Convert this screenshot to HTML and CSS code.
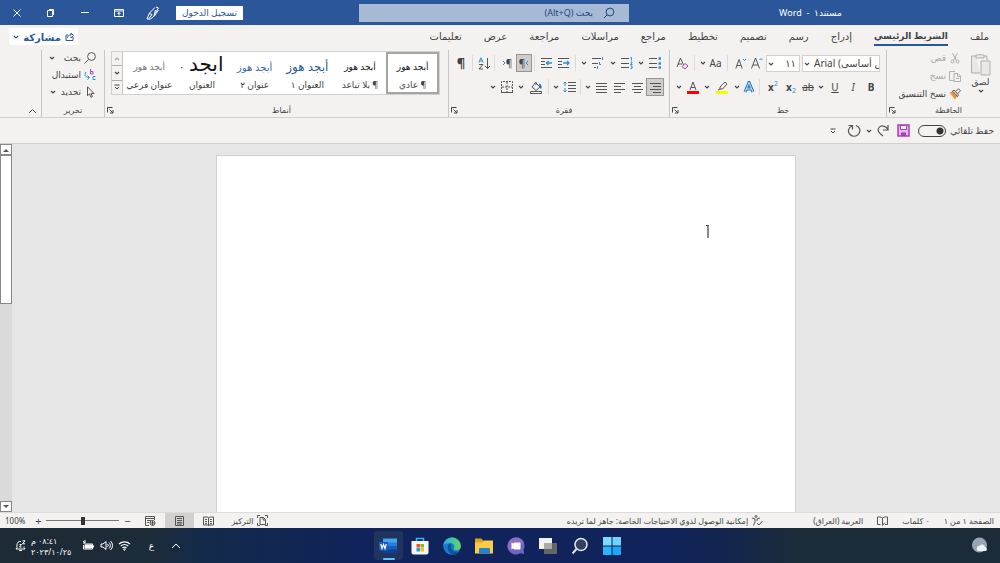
FILE: index.html
```html
<!DOCTYPE html>
<html lang="ar" dir="rtl">
<head>
    <meta charset="UTF-8">
    <meta name="viewport" content="width=device-width, initial-scale=1.0">
    <title>مستند١ - Word</title>
    <link rel="stylesheet" href="styles.css">
</head>
<body>
    <!-- Shared shapes -->
    <svg class="defs" aria-hidden="true">
        <symbol id="chev" viewBox="0 0 6 6"><path d="M1 2l2 2 2-2" fill="none" stroke="currentColor" stroke-width="1.1"/></symbol>
        <symbol id="launch" viewBox="0 0 7 7"><path d="M.5 5.500V.5h5M2.500 2.500L6 6M6 3v3H3" fill="none" stroke="currentColor"/></symbol>
        <symbol id="more" viewBox="0 0 6 6"><path d="M.5 1h5" stroke="currentColor"/><path d="M1 3l2 2 2-2" fill="none" stroke="currentColor"/></symbol>
    </svg>

    <header class="titlebar">
        <div class="doc-title">مستند١ &nbsp;-&nbsp; <span dir="ltr">Word</span></div>
        <label class="search">
            <svg width="12" height="12" viewBox="0 0 12 12"><circle cx="7" cy="5" r="3.900"/><path d="M4.300 7.700L1 11"/></svg>
            <input type="text" placeholder="بحث (Alt+Q)" aria-label="بحث">
        </label>
        <div class="window-tools">
            <button class="signin">تسجيل الدخول</button>
            <button class="win" aria-label="القلم"><svg width="14" height="14" viewBox="0 0 14 14"><path d="M9 1.500L3.500 7 1 13h3.500L8 10l1.500-6M3.500 7.500L6 8.500 3 12.500M10 1l2.500 1L9 7.500M12.500 4L8 10.500"/></svg></button>
            <button class="win" aria-label="خيارات عرض الشريط"><svg width="10" height="10" viewBox="0 0 10 10"><path d="M.5 1.500h9v7h-9zM.5 3h9M5 7.500V4.500M3.500 6L5 4.500 6.500 6"/></svg></button>
            <button class="win" aria-label="تصغير"><svg width="8" height="8" viewBox="0 0 8 8"><path d="M0 3.500h8"/></svg></button>
            <button class="win" aria-label="استعادة"><svg width="8" height="8" viewBox="0 0 8 8"><path d="M.5 1.500h5v6h-5zM2 .5h4.500V6"/></svg></button>
            <button class="win" aria-label="إغلاق"><svg width="8" height="8" viewBox="0 0 8 8"><path d="M.5.5l7 7M7.500.5l-7 7"/></svg></button>
        </div>
    </header>

    <nav class="tabs">
        <a href="#file">ملف</a>
        <a href="#home" class="active">الشريط الرئيسي</a>
        <a href="#insert">إدراج</a>
        <a href="#draw">رسم</a>
        <a href="#design">تصميم</a>
        <a href="#layout">تخطيط</a>
        <a href="#refs">مراجع</a>
        <a href="#mail">مراسلات</a>
        <a href="#review">مراجعة</a>
        <a href="#view">عرض</a>
        <a href="#help">تعليمات</a>
        <button class="share">
            <svg width="9" height="9" viewBox="0 0 9 9" class="ic"><path d="M3 3H1v5.500h7V5M2.500 6c0-2 1.500-3 3.500-3V1l2.500 2.500L6 6V4.500"/></svg>
            مشاركة
            <svg class="chev"><use href="#chev"/></svg>
        </button>
    </nav>

    <section class="ribbon">
        <div class="group">
            <div class="clipboard">
                <button class="paste">
                    <svg width="21" height="23" viewBox="0 0 21 23" class="ic gray"><path d="M6 3H1.500v17H10M14 3h3v4M6 5V2h2.500a2 2 0 0 1 3 0H14v3zM11 8h9v14h-9z" fill="#e9e8e7"/></svg>
                    <span>لصق</span>
                    <svg class="chev"><use href="#chev"/></svg>
                </button>
                <div class="stack">
                    <button disabled><svg width="12" height="12" viewBox="0 0 12 12" class="ic gray"><path d="M3.500 1l4 7.500M8.500 1l-4 7.500"/><circle cx="3.500" cy="9.500" r="1.500"/><circle cx="8.500" cy="9.500" r="1.500"/></svg>قص</button>
                    <button disabled><svg width="12" height="12" viewBox="0 0 12 12" class="ic gray"><path d="M5 10.500H.5v-9H6M5 3.500h4l2.500 2.500v5.500H5zM8.500 3.500v3h3M7 8.500h3"/></svg>نسخ</button>
                    <button><svg width="12" height="12" viewBox="0 0 12 12"><path d="M.5 4.500L5 2.500l4 5L6 11.500z" fill="#f0923a"/><path d="M3.500 3L5 2l4.500 5-1 1.500z" fill="#fff" stroke="#555"/><path d="M6.500 3.500L9.500.8l2 2-3 3z" fill="#fff" stroke="#555"/></svg>نسخ التنسيق</button>
                </div>
            </div>
            <div class="caption wide"><span>الحافظة</span><svg class="launch"><use href="#launch"/></svg></div>
        </div>

        <div class="group">
            <div class="row font-row">
                <span class="combo font-name"><select dir="ltr" aria-label="الخط"><option>Arial (نص أساسي)</option></select><svg class="chev"><use href="#chev"/></svg></span>
                <span class="combo font-size"><select aria-label="حجم الخط"><option>١١</option></select><svg class="chev"><use href="#chev"/></svg></span>
                <button class="w17" aria-label="تكبير"><svg width="13" height="12" viewBox="0 0 13 12" class="ic"><path d="M.5 11.500L4.500 1l4 10.500M2 8h5"/><path d="M8.500 3L10 1.500 11.500 3" class="blue"/></svg></button>
                <button class="w17" aria-label="تصغير"><svg width="12" height="12" viewBox="0 0 12 12" class="ic"><path d="M.8 11.500L4 2.500l3.200 9M2 8.500h4"/><path d="M8 2l1.500 1.500L11 2" class="blue"/></svg></button>
                <i class="sep s8"></i>
                <button class="w17">Aa</button>
                <button class="drop w8" aria-label="المزيد"><svg class="chev"><use href="#chev"/></svg></button>
                <i class="sep s8"></i>
                <button class="w17" aria-label="مسح"><svg width="13" height="13" viewBox="0 0 13 13" class="ic"><path d="M1 10l3.500-9L8 9M2 7h4"/><path d="M6 9.500l3-3 3 2.500-3 3z" fill="#f3e3f5" stroke="#a63fb5"/></svg></button>
            </div>
            <div class="row font-row">
                <button class="w18"><b>B</b></button>
                <button class="w18"><em>I</em></button>
                <button class="w18"><u>U</u></button>
                <button class="drop w10" aria-label="تسطير"><svg class="chev"><use href="#chev"/></svg></button>
                <button class="w16"><s>ab</s></button>
                <button class="w18" dir="ltr"><b>x</b><sub>2</sub></button>
                <button class="w18" dir="ltr"><b>x</b><sup>2</sup></button>
                <i class="sep s8"></i>
                <button class="w14" aria-label="تأثيرات النص"><svg width="12" height="12" viewBox="0 0 12 12"><path d="M2 11L6 1.500 10 11M3.500 8h5" fill="none" stroke="#1f6fb8" stroke-width="3"/><path d="M2 11L6 1.500 10 11M3.500 8h5" fill="none" stroke="#d9ecf9"/></svg></button>
                <button class="drop w10" aria-label="المزيد"><svg class="chev"><use href="#chev"/></svg></button>
                <button class="w20" aria-label="تمييز"><svg width="12" height="13" viewBox="0 0 12 13" class="ic"><path d="M4 6l5-5 2 2-4.500 5H4zM4 8L2 9"/><path d="M0 11.500h12" stroke="#ff0" stroke-width="3"/></svg></button>
                <button class="drop w10" aria-label="المزيد"><svg class="chev"><use href="#chev"/></svg></button>
                <button class="w18" aria-label="لون الخط"><svg width="12" height="13" viewBox="0 0 12 13" class="ic"><path d="M3 9l3-8 3 8M4 6.500h4"/><path d="M0 11.500h12" stroke="#f00" stroke-width="3"/></svg></button>
                <button class="drop w10" aria-label="المزيد"><svg class="chev"><use href="#chev"/></svg></button>
            </div>
            <div class="caption wide"><span>خط</span><svg class="launch"><use href="#launch"/></svg></div>
        </div>

        <div class="group">
            <div class="row para-row">
                <button class="w18" aria-label="تعداد نقطي"><svg width="12" height="12" viewBox="0 0 12 12" class="ic"><path d="M0 1.500h8M0 6.500h8M0 10.500h8"/><path d="M9.500 1.500h2.500M9.500 6.500h2.500M9.500 10.500h2.500" class="blue" stroke-width="2.500"/></svg></button>
                <button class="drop w10" aria-label="المزيد"><svg class="chev"><use href="#chev"/></svg></button>
                <button class="w18" aria-label="تعداد رقمي"><svg width="12" height="12" viewBox="0 0 12 12" class="ic"><path d="M0 1.500h8M0 6.500h8M0 10.500h8"/><path d="M9.500.5h1V3.500M9.500 5h1.500v1l-1.500 1.500h2M9.500 9h1.500v2.500H9.500" class="blue"/></svg></button>
                <button class="drop w10" aria-label="المزيد"><svg class="chev"><use href="#chev"/></svg></button>
                <button class="w20" aria-label="متعدد المستويات"><svg width="12" height="12" viewBox="0 0 12 12" class="ic"><path d="M0 1.500h9M0 6.500h6M2 10.500h2"/><path d="M10.500 0V3M7.500 5v2.500H9M5.500 9v3" class="blue"/></svg></button>
                <button class="drop w8" aria-label="المزيد"><svg class="chev"><use href="#chev"/></svg></button>
                <i class="sep s8"></i>
                <button class="w16" aria-label="إنقاص المسافة"><svg width="12" height="10" viewBox="0 0 12 10" class="ic"><path d="M0 .5h11M0 9.500h11M0 3.500h4M0 6.500h4"/><path d="M5 5h6M9 3l2 2-2 2" class="blue" stroke-width="1.300"/></svg></button>
                <button class="w18" aria-label="زيادة المسافة"><svg width="12" height="10" viewBox="0 0 12 10" class="ic"><path d="M0 .5h11M0 9.500h11M0 3.500h4M0 6.500h4"/><path d="M11 5H5M7.500 3l-2 2 2 2" class="blue" stroke-width="1.300"/></svg></button>
                <i class="sep s6"></i>
                <button class="w16 pressed" dir="ltr">¶<svg width="4" height="6" viewBox="0 0 4 6" class="ic"><path d="M3 1L1 3l2 2" class="blue"/></svg></button>
                <button class="w18" dir="ltr"><svg width="4" height="6" viewBox="0 0 4 6" class="ic"><path d="M1 1l2 2-2 2" class="blue"/></svg>¶</button>
                <i class="sep s6"></i>
                <button class="w16" aria-label="فرز"><svg width="13" height="13" viewBox="0 0 13 13" class="ic"><path d="M.8 5.500L3 .8l2.200 4.700M1.500 4h3" class="blue"/><path d="M1 7.500h4l-4 4.500h4M9.500 1v10.500M7 9l2.500 2.500L12 9"/></svg></button>
                <i class="sep s6"></i>
                <button class="w18 pilcrow">¶</button>
            </div>
            <div class="row para-row">
                <button class="w18 pressed" aria-label="محاذاة لليمين"><svg width="11" height="11" viewBox="0 0 11 11" class="ic"><path d="M0 1.500h11M3 4.500h8M0 7.500h11M3 10.500h8"/></svg></button>
                <button class="w18" aria-label="توسيط"><svg width="11" height="11" viewBox="0 0 11 11" class="ic"><path d="M0 1.500h11M2 4.500h7M0 7.500h11M2 10.500h7"/></svg></button>
                <button class="w18" aria-label="محاذاة لليسار"><svg width="11" height="11" viewBox="0 0 11 11" class="ic"><path d="M0 1.500h11M0 4.500h7M0 7.500h11M0 10.500h7"/></svg></button>
                <button class="w18" aria-label="ضبط"><svg width="11" height="11" viewBox="0 0 11 11" class="ic"><path d="M0 1.500h11M0 4.500h11M0 7.500h11M0 10.500h11"/></svg></button>
                <button class="drop w8" aria-label="المزيد"><svg class="chev"><use href="#chev"/></svg></button>
                <i class="sep s6"></i>
                <button class="w18" aria-label="تباعد الأسطر"><svg width="13" height="12" viewBox="0 0 13 12" class="ic"><path d="M5 1.500h8M5 4.500h8M5 7.500h8M5 10.500h8"/><path d="M2 1v4M2 7v4M.5 2.500L2 1l1.500 1.500M.5 9.500L2 11l1.500-1.500" class="blue"/></svg></button>
                <button class="drop w8" aria-label="المزيد"><svg class="chev"><use href="#chev"/></svg></button>
                <i class="sep s6"></i>
                <button class="w20" aria-label="تظليل"><svg width="12" height="13" viewBox="0 0 12 13" class="ic"><path d="M5.500 1.500L10 6 6 9.500 2 6zM6 1v3"/><path d="M9 3.500c1.500 0 2 1.500 1.800 4" stroke="#1f6fb8" stroke-width="1.600"/><path d="M.5 10.500h11v2H.5z" fill="#fff"/></svg></button>
                <button class="drop w10" aria-label="المزيد"><svg class="chev"><use href="#chev"/></svg></button>
                <button class="w18" aria-label="حدود"><svg width="12" height="12" viewBox="0 0 12 12" class="ic"><path d="M.5 11V.5h11V11M6 1v10M1 6h10" stroke-dasharray="2 1"/><path d="M0 11.500h12"/></svg></button>
                <button class="drop w10" aria-label="المزيد"><svg class="chev"><use href="#chev"/></svg></button>
            </div>
            <div class="caption wide"><span>فقرة</span><svg class="launch"><use href="#launch"/></svg></div>
        </div>

        <div class="group">
            <div class="gallery">
                <button class="style selected"><span class="sample">أبجد هوز</span><span>¶ عادي</span></button>
                <button class="style"><span class="sample">أبجد هوز</span><span>¶ بلا تباعد</span></button>
                <button class="style h1"><span class="sample">أبجد هوز</span><span>العنوان ١</span></button>
                <button class="style h2"><span class="sample">أبجد هوز</span><span>عنوان ٢</span></button>
                <button class="style title"><span class="sample">ابجد<small>·</small></span><span>العنوان</span></button>
                <button class="style subtitle"><span class="sample">أبجد هوز</span><span>عنوان فرعي</span></button>
                <div class="gallery-nav">
                    <button disabled aria-label="أعلى"><svg class="chev up"><use href="#chev"/></svg></button>
                    <button aria-label="أسفل"><svg class="chev"><use href="#chev"/></svg></button>
                    <button aria-label="المزيد"><svg class="chev"><use href="#more"/></svg></button>
                </div>
            </div>
            <div class="caption wide"><span>أنماط</span><svg class="launch"><use href="#launch"/></svg></div>
        </div>

        <div class="group">
            <div class="stack editing">
                <button><svg width="12" height="12" viewBox="0 0 12 12" class="ic"><circle cx="7.500" cy="4.500" r="3.900"/><path d="M4.500 7.500L.5 11.500"/></svg>بحث<svg class="chev far"><use href="#chev"/></svg></button>
                <button><svg width="12" height="12" viewBox="0 0 12 12" class="ic"><path d="M6.500 0v5M6.500 2.500h2.500V5H6.500" stroke="#b146c2"/><path d="M11.500 7.500H9v3h2.500M2 3c-2 3-1 5 3 5.500M3.500 6.500l2 2-2 2" class="blue"/></svg>استبدال</button>
                <button><svg width="12" height="12" viewBox="0 0 12 12" class="ic"><path d="M3.500.8v9l2-2 1.500 3.500 1.500-.8L7 7.500h3z"/></svg>تحديد<svg class="chev"><use href="#chev"/></svg></button>
            </div>
            <div class="caption"><span>تحرير</span></div>
        </div>

        <button class="collapse" aria-label="طي الشريط"><svg width="9" height="6" viewBox="0 0 9 6" class="ic"><path d="M1 5l3.500-3.500L8 5"/></svg></button>
    </section>

    <div class="quickbar">
        <label class="autosave">حفظ تلقائي <input type="checkbox"></label>
        <button aria-label="حفظ"><svg width="13" height="13" viewBox="0 0 13 13"><path d="M1 1h11v11H1z" fill="#e5b9eb" stroke="#a63fb5" stroke-width="1.500"/><path d="M3.500 1.500h6v4h-6z" fill="#fff" stroke="#a63fb5"/><path d="M4 8.500h5V12H4z" fill="#a63fb5"/></svg></button>
        <button aria-label="تراجع"><svg width="12" height="13" viewBox="0 0 12 13" class="ic"><path d="M11 1v5H6M11 5.500C9 1.500 4 1 2 3.500S1.500 9 6 12" stroke-width="1.200"/></svg></button>
        <button class="undo-list w8" aria-label="المزيد"><svg class="chev"><use href="#chev"/></svg></button>
        <button aria-label="تكرار"><svg width="14" height="14" viewBox="0 0 14 14" class="ic"><path d="M1.500 1.500h4v4M5 2C1 3.500.5 8 3 10.500s7 2.500 9-1 .5-6.500-3-8" stroke-width="1.200"/></svg></button>
        <button class="customize" aria-label="تخصيص"><svg class="chev"><use href="#more"/></svg></button>
    </div>

    <main class="workspace">
        <div class="canvas">
            <div class="page" contenteditable="true" spellcheck="false"><p><span class="caret"></span></p></div>
        </div>
        <div class="scrollbar">
            <button aria-label="أعلى"><svg width="6" height="4" viewBox="0 0 6 4"><path d="M0 4l3-3 3 3z"/></svg></button>
            <div class="track"><div class="thumb"></div></div>
            <button aria-label="أسفل"><svg width="6" height="4" viewBox="0 0 6 4"><path d="M0 0l3 3 3-3z"/></svg></button>
        </div>
    </main>

    <footer class="status">
        <span>الصفحة ١ من ١</span>
        <span>٠ كلمات</span>
        <svg width="11" height="10" viewBox="0 0 11 10" class="ic"><path d="M5.500 2C4 .8 2 .8.500 1v7.500h3M5.500 2C7 .8 9 .8 10.500 1v7.500H8M5.500 2v7.500L8 6.500"/></svg>
        <span>العربية (العراق)</span>
        <span class="access"><svg width="12" height="11" viewBox="0 0 12 11" class="ic"><circle cx="5" cy="1.500" r="1"/><path d="M1 3l3 1v3l-1.500 3.500M9 3L6 4v2M6 8l2 2 3.500-4"/></svg>إمكانية الوصول لذوي الاحتياجات الخاصة: جاهز لما تريده</span>
        <div class="views">
            <button class="focus"><svg width="11" height="11" viewBox="0 0 11 11" class="ic"><path d="M.5 3V.5H3M8 .5h2.500V3M.5 8v2.500H3M8 10.500h2.500V8M3 2.500h3.500L8.500 4.500v5H3zM6 2.500v2.500h2.500"/></svg>التركيز</button>
            <button class="view" aria-label="وضع القراءة"><svg width="11" height="10" viewBox="0 0 11 10" class="ic"><path d="M.5 1h4l1 1 1-1h4v8H.5zM5.500 2v8M2 3.500h2M2 5.500h2M7 3.500h2M7 5.500h2M2 7.500h2M7 7.500h2"/></svg></button>
            <button class="view on" aria-label="تخطيط الطباعة"><svg width="9" height="10" viewBox="0 0 9 10" class="ic"><path d="M.5.5h8v9h-8zM2 2.500h5M2 4.500h5M2 6.500h5M2 8h5"/></svg></button>
            <button class="view" aria-label="تخطيط ويب"><svg width="11" height="10" viewBox="0 0 11 10" class="ic"><path d="M4 9.500H.5v-9h9V4M.5 2.500h9M2 4.500h4M2 6.500h2"/><circle cx="7.500" cy="7" r="2.500"/><path d="M5 7h5M7.500 4.500v5"/></svg></button>
        </div>
        <div class="zoom">
            <button aria-label="تصغير">−</button>
            <input type="range" min="10" max="190" value="100" aria-label="تكبير/تصغير">
            <button aria-label="تكبير">+</button>
            <span>100%</span>
        </div>
    </footer>

    <div class="taskbar">
        <a href="#weather" class="weather" aria-label="الطقس"><svg width="18" height="18" viewBox="0 0 18 18"><circle cx="8.500" cy="8" r="7.500" fill="#98a4b2"/><path d="M8 14a2.500 2.500 0 0 1 .5-5 3 3 0 0 1 5.500 1 2.200 2.200 0 0 1 1 4z" fill="#eef3f8"/></svg></a>
        <div class="apps">
            <button aria-label="ابدأ"><svg width="18" height="18" viewBox="0 0 18 18"><path d="M0 0h8.500v8.500H0z" fill="#7bdcff"/><path d="M9.500 0H18v8.500H9.500z" fill="#6fd3fc"/><path d="M0 9.500h8.500V18H0z" fill="#29b4fa"/><path d="M9.500 9.500H18V18H9.500z" fill="#1ba7f5"/></svg></button>
            <button aria-label="بحث"><svg width="18" height="18" viewBox="0 0 18 18"><circle cx="10" cy="7.500" r="6" fill="#33415f" stroke="#dfe3ea" stroke-width="1.600"/><path d="M5.500 12L1.500 16.500" stroke="#dfe3ea" stroke-width="2"/></svg></button>
            <button aria-label="عرض المهام"><svg width="18" height="18" viewBox="0 0 18 18"><path d="M0 1h13v11H0z" fill="#f2f2f2"/><path d="M5 6h13v11H5z" fill="#666"/><path d="M5 6h8v6H5z" fill="#aaa"/></svg></button>
            <button aria-label="الدردشة"><svg width="18" height="18" viewBox="0 0 18 18"><path d="M9 .5a8.500 8.500 0 0 1 7.500 12.500l.8 4-3.800-.8A8.500 8.500 0 1 1 9 .5z" fill="#6f65c9"/><path d="M9 .5A8.500 8.500 0 0 1 17 6L2 13.500A8.500 8.500 0 0 1 9 .5z" fill="#8a6fc4"/><path d="M4.500 5.500L7 7v4l-2.500 1.500z" fill="#fff"/><rect x="6.500" y="5.500" width="7" height="7" rx="1" fill="#fff"/></svg></button>
            <button aria-label="مستكشف الملفات"><svg width="18" height="18" viewBox="0 0 18 18"><path d="M0 1.500h6.500L8 3.500V8H0z" fill="#e0a01c"/><path d="M0 5.500h7l1.500-2H18v13H0z" fill="#fdcb46"/><path d="M4 16.500V12a1 1 0 0 1 1-1h9a1 1 0 0 1 1 1v4.500z" fill="#2284cf"/></svg></button>
            <button aria-label="Edge"><svg width="18" height="18" viewBox="0 0 18 18"><defs><linearGradient id="eg" x1="0" x2="1"><stop offset="0" stop-color="#29a9ea"/><stop offset="1" stop-color="#65d85a"/></linearGradient></defs><circle cx="9" cy="9" r="8.800" fill="#147fd1"/><path d="M.3 8A8.800 8.800 0 0 1 17.800 9c0 3-2.300 4.300-4.500 4.300-2 0-3-1-2.300-2.300 1.300-3-1-5-4-5S1.500 7 .3 8z" fill="url(#eg)"/><path d="M7 6.500c-4 2-3 9.500 3 11.200 3 0 5.500-1.500 7-3.700-5 2.500-10-1-8.500-5.500z" fill="#11529c"/></svg></button>
            <button aria-label="Microsoft Store"><svg width="18" height="18" viewBox="0 0 18 18"><path d="M5.500 5V1.500h7V5" fill="none" stroke="#32b5ee" stroke-width="1.500"/><path d="M.5 4h17v11.500a2 2 0 0 1-2 2h-13a2 2 0 0 1-2-2z" fill="#f5f5f5"/><path d="M5.500 7H9v3.500H5.500z" fill="#f05025"/><path d="M9.500 7H13v3.500H9.500z" fill="#7fba1f"/><path d="M5.500 11H9v3.500H5.500z" fill="#12a3ee"/><path d="M9.500 11H13v3.500H9.500z" fill="#fdb913"/></svg></button>
            <button class="running" aria-label="Word"><svg width="18" height="18" viewBox="0 0 18 18"><path d="M4 1.500h14V6H4z" fill="#41a5ee"/><path d="M4 5.500h14V9H4z" fill="#2b7cd3"/><path d="M4 9h14v4H4z" fill="#185abd"/><path d="M4 12.500h14v4H4z" fill="#103f91"/><path d="M0 5h9v8.500H0z" fill="#185abd"/><path d="M1.800 7l1.200 4.500L4.500 7.500 6 11.500 7.200 7" fill="none" stroke="#fff" stroke-width="1.200"/></svg></button>
        </div>
        <div class="tray">
            <button aria-label="الأيقونات المخفية"><svg width="10" height="6" viewBox="0 0 10 6"><path d="M1 5l4-4 4 4"/></svg></button>
            <button class="lang">ع</button>
            <button class="net" aria-label="الشبكة والصوت والبطارية">
                <svg width="13" height="11" viewBox="0 0 13 11"><path d="M1 4a8 8 0 0 1 11 0M2.800 6a5.500 5.500 0 0 1 7.400 0M4.500 8a3 3 0 0 1 4 0" stroke-width="1.300"/><circle cx="6.500" cy="9.500" r=".8"/></svg>
                <svg width="13" height="11" viewBox="0 0 13 11"><path d="M1 4v3h2l3 2.500v-8L3 4zM7.500 4a2 2 0 0 1 0 3M9 2.500a4 4 0 0 1 0 6M10.500 1a6 6 0 0 1 0 9"/></svg>
                <svg width="13" height="11" viewBox="0 0 13 11"><path d="M2.500 4h8v5h-9V5M11.500 5.500v2M1 1l2 2M3 0v3H1"/><path d="M3 5h6.500v3H3z" fill="#fff"/></svg>
            </button>
            <button class="clock"><span>٠٨:٤١ م</span><span>٢٠٢٣/١٠/٢٥</span></button>
            <button aria-label="الإشعارات"><svg width="11" height="12" viewBox="0 0 11 12"><path d="M6 1.500C3 1 2 3 2 5v2.500L1 9h9L9 7.500V6.500M4 10.500h3M7.500.8H10L7.500 3.800H10M4.500 4.500h2l-2 2.500h2"/></svg></button>
        </div>
    </div>
</body>
</html>
```
FILE: styles.css
```css
* { box-sizing: border-box; }
body { margin: 0; min-height: 100vh; display: flex; flex-direction: column; font: 9px/12px "Noto Sans", "DejaVu Sans", sans-serif; color: #444; background: #f3f2f1; }
button { font: inherit; color: inherit; background: none; border: 0; padding: 0; display: flex; align-items: center; justify-content: center; }
button:disabled { color: #a8a6a4; }
a { color: inherit; text-decoration: none; }
svg { display: block; flex: none; }
.defs { position: absolute; width: 0; height: 0; }
.ic { fill: none; stroke: #555; }
.gray { stroke: #b1afad; }
.blue { stroke: #2b8fd6; }
.chev { width: 6px; height: 6px; }
.up { transform: rotate(180deg); }
.launch { width: 7px; height: 7px; }

/* Title bar */
.titlebar { display: grid; grid-template-columns: 371fr 270fr 359fr; align-items: center; height: 25px; background: #2b579a; color: #fff; }
.doc-title { padding-right: 8px; text-align: center; }
.search { display: flex; align-items: center; gap: 10px; height: 18px; padding: 0 14px; background: #a6b9d5; }
.search svg { fill: none; stroke: #23477f; }
.search input { flex: 1; min-width: 0; border: 0; padding: 0; background: none; font: inherit; }
.search input::placeholder { color: #23477f; opacity: 1; }
.window-tools { display: flex; justify-content: flex-end; align-items: center; }
.signin { width: 67px; height: 14px; margin-left: 6px; background: #fff; color: #2b579a; }
.win { width: 34px; height: 25px; }
.win svg { fill: none; stroke: #fff; }

/* Tabs */
.tabs { display: flex; align-items: center; gap: 22px; height: 25px; padding: 0 11px 0 9px; font-size: 10px; }
.tabs a { line-height: 14px; padding-bottom: 1px; border-bottom: 2px solid transparent; }
.tabs .active { font-size: 9px; font-weight: bold; border-color: #2b579a; }
.share { gap: 4px; width: 69px; height: 17px; margin: 0 auto 2px 0; background: #fff; border-radius: 2px; color: #2b579a; font-weight: bold; }
.share .ic { stroke: #2b579a; }

/* Ribbon */
.ribbon { display: grid; grid-template-columns: 114px 217px 221px 1fr 63px 41px; height: 68px; border-bottom: 1px solid #d2d0ce; }
.group { display: flex; flex-direction: column; border-left: 1px solid #c8c6c4; }
.row { display: flex; align-items: center; height: 24px; }
.row:first-child { margin-top: 1px; }
.font-row { padding-right: 6px; }
.para-row { padding-right: 5px; }
.row button { height: 18px; font-size: 10px; }
.w8 { width: 8px; }
.w10 { width: 10px; }
.w14 { width: 14px; }
.w16 { width: 16px; }
.w17 { width: 17px; }
.w18 { width: 18px; }
.w20 { width: 20px; }
.sep { flex: none; width: 1px; height: 16px; background: #dddbd9; }
.s8 { margin: 0 4px 0 3px; }
.s6 { margin: 0 3px 0 2px; }
.pressed { background: #cfcdcb; border: 1px solid #979593; }
.row .pilcrow { font-size: 13px; font-weight: bold; }
.row sub, .row sup { font-size: 7px; color: #2b8fd6; line-height: 7px; }
.row sub { margin-top: 7px; }
.row sup { margin-bottom: 7px; }
.combo { position: relative; height: 17px; margin-left: 2px; }
.combo select { width: 100%; height: 100%; appearance: none; border: 1px solid #d2d0ce; border-radius: 0; background: #fff; color: #444; font: inherit; padding: 0; }
.combo .chev { position: absolute; left: 2px; top: 6px; }
.font-name { width: 78px; }
.combo.font-name select { padding-left: 11px; font-size: 10px; }
.font-size { width: 34px; margin-left: 0; }
.combo.font-size select { padding-right: 3px; font-size: 10px; }
.caption { position: relative; margin-top: auto; height: 14px; text-align: center; font-size: 8px; line-height: 13px; }
.wide { padding-left: 10px; }
.caption .launch { position: absolute; left: 2px; bottom: 3px; }
.clipboard { display: flex; gap: 9px; padding: 0 9px 0 0; }
.paste { flex-direction: column; justify-content: flex-start; padding-top: 3px; width: 21px; }
.stack { display: flex; flex-direction: column; align-items: flex-start; margin-top: -1px; }
.stack button { height: 18px; gap: 3px; white-space: nowrap; }
.editing { padding-right: 8px; }
.editing button { height: 17px; }
.editing .chev { margin-right: 2px; }
.editing .far { margin-right: 6px; }
.gallery { display: flex; margin: 1px 8px 0 6px; height: 44px; border: 1px solid #d2d0ce; background: #fff; }
.style { flex: 1 1 0; min-width: 0; flex-direction: column; justify-content: flex-start; border: 2px solid transparent; white-space: nowrap; }
.sample { height: 25px; line-height: 26px; color: #111; }
.selected { border-color: #a5a5a1; }
.h1 .sample { font-size: 12px; color: #2b579a; }
.h2 .sample { font-size: 10px; color: #3a69ad; }
.title .sample { font-size: 20px; line-height: 20px; }
.title small { margin-right: 6px; font-size: 9px; }
.subtitle .sample { color: #767676; }
.gallery-nav { display: flex; flex-direction: column; width: 11px; background: #f3f2f1; border-right: 1px solid #c8c6c4; }
.gallery-nav button { flex: 1; border-bottom: 1px solid #b0aeac; }
.gallery-nav button:last-child { border: 0; }
.collapse { align-items: flex-end; padding: 0 0 3px 24px; justify-content: center; }

/* Quick access */
.quickbar { display: flex; align-items: center; gap: 8px; height: 26px; padding: 0 6px; border-bottom: 1px solid #d2d0ce; }
.autosave { display: flex; align-items: center; gap: 4px; }
.autosave input { appearance: none; width: 28px; height: 12px; margin: 0; border: 1px solid #444; border-radius: 6px; background: radial-gradient(circle at 21px 5px, #333 3px, transparent 4px); }
.undo-list { margin: 0 -4px; }
.customize { margin-right: 3px; }

/* Document area */
.workspace { flex: 1; display: flex; background: #e6e6e6; }
.canvas { flex: 1; display: flex; justify-content: center; padding-top: 11px; }
.page { width: 580px; padding: 69px 86px; background: #fff; border: 1px solid #d0d0d0; border-bottom: 0; outline: 0; color: #111; }
.page p { margin: 0; line-height: 14px; }
.caret { display: block; width: 3px; height: 13px; border-top: 1px solid #222; border-right: 2px solid #888; }
.scrollbar { display: flex; flex-direction: column; width: 12px; background: #dadada; }
.scrollbar button { height: 11px; border: 1px solid #8a8886; background: #fff; }
.scrollbar svg { fill: #555; }
.track { flex: 1; }
.thumb { height: 43%; background: #fff; border: 1px solid #8a8886; }

/* Status bar */
.status { display: flex; align-items: center; gap: 14px; height: 16px; padding: 0 6px 0 5px; border-top: 1px solid #dcdcdc; font-size: 8px; white-space: nowrap; }
.access, .focus { display: flex; align-items: center; gap: 3px; }
.access { margin-right: 36px; }
.views { display: flex; align-items: center; margin-right: auto; }
.focus { margin-left: 8px; }
.view { width: 29px; height: 15px; }
.on { background: #d2d0ce; }
.zoom { display: flex; align-items: center; gap: 4px; margin-right: -9px; }
.zoom button { width: 8px; font-size: 11px; }
.zoom span { margin-right: 5px; }
.zoom input { appearance: none; width: 73px; height: 1px; margin: 0; background: #777; }
.zoom input::-webkit-slider-thumb { appearance: none; width: 4px; height: 8px; background: #333; }

/* Taskbar */
.taskbar { display: grid; grid-template-columns: 1fr auto 1fr; align-items: center; height: 35px; padding: 0 11px; color: #fff; background: linear-gradient(90deg, #1d2b36 0, #1c2b38 15%, #132a4a 20%, #10235a 36%, #10235a 66%, #122550 72%, #1c2b38 80%, #1c2b38 100%); }
.weather { justify-self: start; }
.apps { display: flex; gap: 3px; }
.apps button { width: 29px; height: 29px; border-radius: 3px; }
.running { position: relative; background: #20345f; }
.running::after { content: ""; position: absolute; left: 9px; bottom: 0; width: 12px; height: 2px; border-radius: 1px; background: #5fc4f5; }
.tray { display: flex; justify-content: flex-end; align-items: center; gap: 5px; padding-left: 4px; }
.tray svg { fill: none; stroke: #fff; }
.lang { width: 20px; margin: 0 5px; }
.net { gap: 5px; }
.clock { flex-direction: column; align-items: flex-end; font-size: 8px; line-height: 11px; margin-right: 6px; }
```
